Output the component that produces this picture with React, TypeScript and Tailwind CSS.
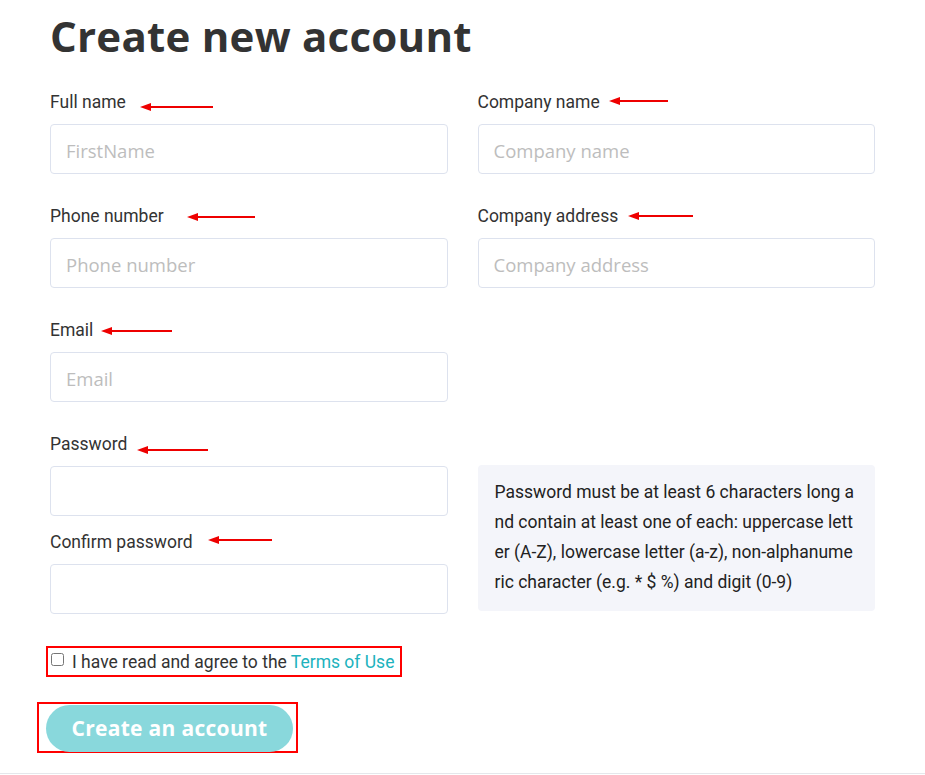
import React from "react";

const labelCls = "block text-[17.5px] leading-6 text-[#333] font-['Roboto',sans-serif]";
const inputCls =
  "block w-full h-[50px] rounded-[4px] border border-[#dde2ee] bg-white px-[15px] pt-[3px] text-[18.5px] text-[#333] font-['Open_Sans',sans-serif] placeholder:text-[#bdbdbd] outline-none";

function Field({ label, placeholder, type = "text" }: { label: string; placeholder?: string; type?: string }) {
  return (
    <div>
      <label className={labelCls}>{label}</label>
      <input type={type} placeholder={placeholder} className={`${inputCls} mt-[10px]`} />
    </div>
  );
}

const arrows: [number, number, number][] = [
  [140, 213, 107],
  [609, 668, 101],
  [187, 255, 217],
  [628, 693, 216],
  [101, 172, 331],
  [137, 208, 450],
  [208, 272, 540],
];

export default function App() {
  return (
    <div className="relative w-[925px] h-[774px] border-b border-[#e5e7eb] bg-white font-['Roboto',sans-serif]">
      <div className="pl-[50px] pt-[12px] w-[875px]">
        <h1 className="text-[42px] leading-[48px] font-bold text-[#333] font-['Open_Sans',sans-serif] tracking-[0.25px]">
          Create new account
        </h1>
        <div className="mt-[30px] grid grid-cols-2 gap-x-[30px]">
          <Field label="Full name" placeholder="FirstName" />
          <Field label="Company name" placeholder="Company name" />
          <div className="mt-[30px]">
            <Field label="Phone number" placeholder="Phone number" />
          </div>
          <div className="mt-[30px]">
            <Field label="Company address" placeholder="Company address" />
          </div>
          <div className="mt-[30px]">
            <Field label="Email" placeholder="Email" />
          </div>
          <div />
          <div className="mt-[30px]">
            <Field label="Password" type="password" />
            <div className="mt-[14px]">
              <Field label="Confirm password" type="password" />
            </div>
          </div>
          <div className="mt-[63px]">
            <div className="h-[146px] rounded-[4px] bg-[#f4f5fa] pl-[17px] pr-[17px] pt-[12px] text-[17.5px] leading-[30px] text-[#222] break-all">
              Password must be at least 6 characters long and contain at least one of each: uppercase letter (A-Z), lowercase letter (a-z), non-alphanumeric character (e.g. * $ %) and digit (0-9)
            </div>
          </div>
        </div>
        <div className="mt-[32px] -ml-[4px] inline-flex items-center border-2 border-[#ff0000] pl-[3px] pr-[6px] h-[31px]">
          <input type="checkbox" className="w-[13px] h-[13px] m-0 -mt-[4px]" />
          <span className="ml-[8px] text-[17.5px] leading-6 text-[#333]">
            I have read and agree to the <span className="text-[#20b2bd]">Terms of Use</span>
          </span>
        </div>
        <div className="mt-[25px] -ml-[13px] w-[261px] h-[51px] border-2 border-[#ff0000] pl-[7px] pt-[1px]">
          <button className="w-[247px] h-[47px] rounded-full bg-[#89d8dc] text-white text-[21px] tracking-[0.3px] font-bold font-['Open_Sans',sans-serif]">
            Create an account
          </button>
        </div>
      </div>
      <svg className="absolute inset-0 pointer-events-none" width="925" height="775">
        {arrows.map(([x1, x2, y], i) => (
          <g key={i}>
            <line x1={x1 + 8} y1={y} x2={x2} y2={y} stroke="#ee0000" strokeWidth="2" />
            <polygon points={`${x1},${y} ${x1 + 11},${y - 4} ${x1 + 11},${y + 4}`} fill="#ee0000" />
          </g>
        ))}
      </svg>
    </div>
  );
}
